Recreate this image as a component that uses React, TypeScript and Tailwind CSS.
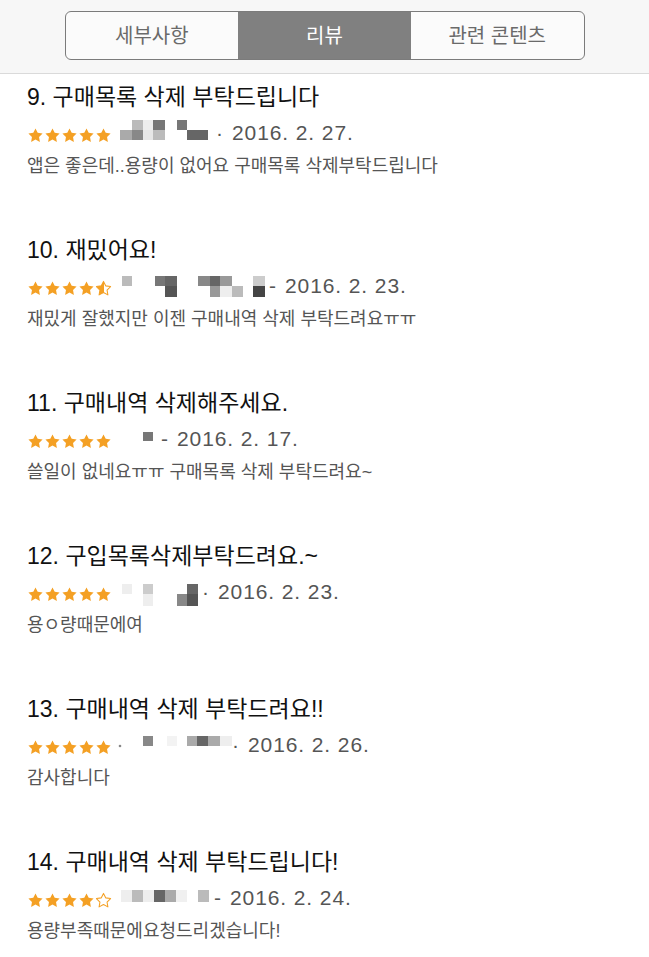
import React from 'react';

type Cell = [number, number, number, number, string];

type Review = {
  n: number;
  title: string;
  rating: number;
  sep: string;
  date: string;
  body: string;
  mosaicW: number;
  cells: Cell[];
  dot?: boolean;
};

const reviews: Review[] = [
  {
    n: 9,
    title: '구매목록 삭제 부탁드립니다',
    rating: 5,
    sep: '·',
    date: '2016. 2. 27.',
    body: '앱은 좋은데..용량이 없어요 구매목록 삭제부탁드립니다',
    mosaicW: 106,
    cells: [
      [10, 12, 12, 10, '#aaaaaa'],
      [22, 2, 11, 10, '#bbbbbb'],
      [22, 12, 11, 10, '#888888'],
      [33, 2, 10, 10, '#eeeeee'],
      [33, 12, 10, 10, '#e6e6e6'],
      [43, 2, 12, 10, '#777777'],
      [43, 12, 12, 10, '#bbbbbb'],
      [67, 2, 10, 10, '#777777'],
      [77, 12, 21, 10, '#666666'],
    ],
  },
  {
    n: 10,
    title: '재밌어요!',
    rating: 4.5,
    sep: '-',
    date: '2016. 2. 23.',
    body: '재밌게 잘했지만 이젠 구매내역 삭제 부탁드려요ㅠㅠ',
    mosaicW: 159,
    cells: [
      [12, 5, 10, 10, '#bbbbbb'],
      [45, 5, 10, 10, '#777777'],
      [55, 5, 12, 10, '#666666'],
      [55, 15, 12, 11, '#555555'],
      [88, 5, 12, 10, '#888888'],
      [100, 5, 10, 10, '#666666'],
      [100, 15, 10, 11, '#999999'],
      [110, 5, 12, 10, '#999999'],
      [110, 15, 12, 11, '#eeeeee'],
      [122, 15, 11, 11, '#bbbbbb'],
      [143, 5, 12, 10, '#cccccc'],
      [143, 15, 12, 11, '#444444'],
    ],
  },
  {
    n: 11,
    title: '구매내역 삭제해주세요.',
    rating: 5,
    sep: '-',
    date: '2016. 2. 17.',
    body: '쓸일이 없네요ㅠㅠ 구매목록 삭제 부탁드려요~',
    mosaicW: 51,
    cells: [[33, 8, 10, 9, '#777777']],
  },
  {
    n: 12,
    title: '구입목록삭제부탁드려요.~',
    rating: 5,
    sep: '·',
    date: '2016. 2. 23.',
    body: '용ㅇ량때문에여',
    mosaicW: 92,
    cells: [
      [12, 7, 10, 10, '#eeeeee'],
      [33, 7, 10, 10, '#cccccc'],
      [33, 17, 10, 12, '#eeeeee'],
      [67, 17, 10, 12, '#888888'],
      [77, 7, 11, 10, '#666666'],
      [77, 17, 11, 12, '#555555'],
    ],
  },
  {
    n: 13,
    title: '구매내역 삭제 부탁드려요!!',
    rating: 5,
    sep: '·',
    date: '2016. 2. 26.',
    body: '감사합니다',
    mosaicW: 122,
    dot: true,
    cells: [
      [33, 6, 10, 10, '#888888'],
      [57, 6, 10, 10, '#f3f3f3'],
      [77, 6, 10, 10, '#aaaaaa'],
      [87, 6, 11, 10, '#666666'],
      [98, 6, 12, 10, '#aaaaaa'],
      [110, 6, 12, 10, '#eeeeee'],
    ],
  },
  {
    n: 14,
    title: '구매내역 삭제 부탁드립니다!',
    rating: 4,
    sep: '-',
    date: '2016. 2. 24.',
    body: '용량부족때문에요청드리겠습니다!',
    mosaicW: 104,
    cells: [
      [11, 7, 11, 12, '#eeeeee'],
      [22, 7, 11, 12, '#bbbbbb'],
      [33, 7, 11, 12, '#eeeeee'],
      [44, 7, 11, 12, '#666666'],
      [55, 7, 11, 12, '#aaaaaa'],
      [66, 7, 11, 12, '#f0f0f0'],
      [88, 7, 11, 12, '#bbbbbb'],
    ],
  },
];

const STAR = 'M12 2l3.09 6.26L22 9.27l-5 4.87 1.18 6.88L12 17.77l-6.18 3.25L7 14.14 2 9.27l6.91-1.01L12 2z';

const Star = ({ kind, id }: { kind: 'full' | 'half' | 'empty'; id: string }) => (
  <svg width="17" height="17" viewBox="0 0 24 24" className="shrink-0">
    {kind === 'half' && (
      <defs>
        <linearGradient id={id} x1="0" x2="1" y1="0" y2="0">
          <stop offset="0.55" stopColor="#f4a024" />
          <stop offset="0.55" stopColor="#ffffff" />
        </linearGradient>
      </defs>
    )}
    <path
      d={STAR}
      fill={kind === 'full' ? '#f4a024' : kind === 'half' ? `url(#${id})` : 'none'}
      stroke="#f4a024"
      strokeWidth={kind === 'full' ? 0 : 1.5}
      strokeLinejoin="round"
    />
  </svg>
);

const Stars = ({ rating, n }: { rating: number; n: number }) => (
  <div className="mt-[4px] flex">
    {[0, 1, 2, 3, 4].map((i) => (
      <Star
        key={i}
        id={`half-${n}-${i}`}
        kind={rating >= i + 1 ? 'full' : rating >= i + 0.5 ? 'half' : 'empty'}
      />
    ))}
  </div>
);

// blurred user name, drawn as grey mosaic squares
const Mosaic = ({ w, cells, dot }: { w: number; cells: Cell[]; dot?: boolean }) => (
  <svg width={w} height="30" viewBox={`0 0 ${w} 30`} className="ml-[-2px] shrink-0 overflow-visible">
    {dot && <circle cx="10" cy="16" r="1.3" fill="#888888" />}
    {cells.map(([x, y, cw, ch, c], i) => (
      <rect key={i} x={x} y={y} width={cw} height={ch} fill={c} />
    ))}
  </svg>
);

const ReviewItem = ({ r }: { r: Review }) => (
  <div className="flex flex-col pb-[51px]">
    <div className="text-[23px] leading-[36px] text-[#111111]">
      {r.n}. {r.title}
    </div>
    <div className="flex h-[36px] items-center">
      <Stars rating={r.rating} n={r.n} />
      <Mosaic w={r.mosaicW} cells={r.cells} dot={r.dot} />
      <span className="w-[16px] text-[21px] leading-[30px] text-[#555555]">{r.sep}</span>
      <span className="text-[21px] leading-[30px] tracking-[0.9px] text-[#555555]">{r.date}</span>
    </div>
    <div className="text-[18px] leading-[30px] text-[#555555]">{r.body}</div>
  </div>
);

export default function App() {
  return (
    <div
      className="h-[957px] w-[649px] overflow-hidden bg-white"
      style={{ fontFamily: '"Liberation Sans", "Noto Sans CJK KR", sans-serif' }}
    >
      <div className="h-[74px] border-b border-[#dadada] bg-[#f7f7f7] pt-[11px]">
        <div className="mx-auto flex h-[49px] w-[520px] overflow-hidden rounded-[6px] border-[1.5px] border-[#7b7b7b] bg-[#fbfbfb] text-[20px]">
          <div className="flex flex-1 items-center justify-center text-[#6a6a6a]">세부사항</div>
          <div className="flex flex-1 items-center justify-center bg-[#808080] text-white">리뷰</div>
          <div className="flex flex-1 items-center justify-center text-[#6a6a6a]">관련 콘텐츠</div>
        </div>
      </div>
      <div className="pl-[27px] pt-[5px]">
        {reviews.map((r) => (
          <ReviewItem key={r.n} r={r} />
        ))}
      </div>
    </div>
  );
}
